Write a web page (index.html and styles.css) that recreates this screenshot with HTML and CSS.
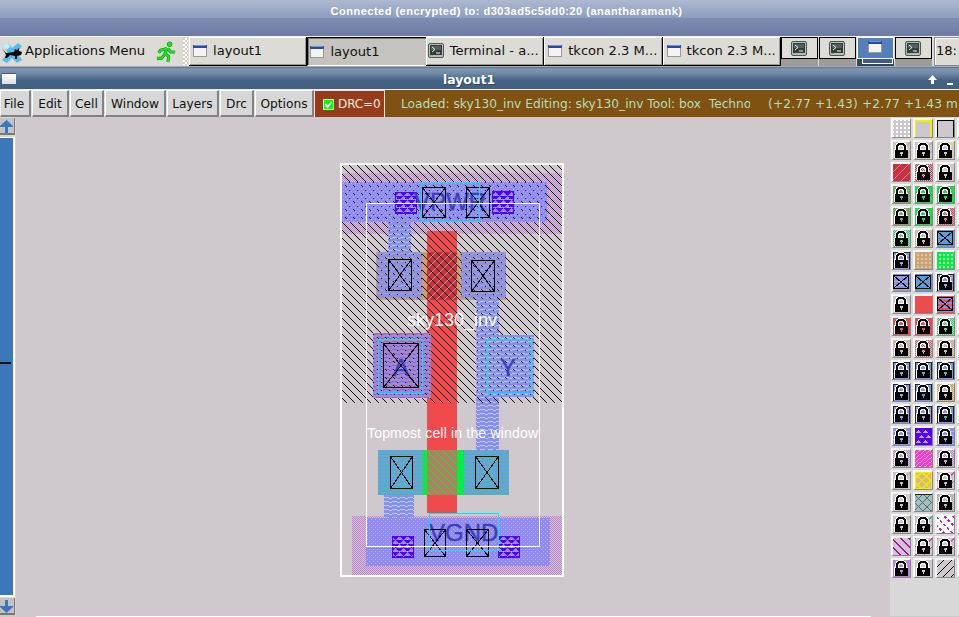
FILE: index.html
```html
<!DOCTYPE html>
<html lang="en">
<head>
<meta charset="utf-8">
<title>layout1</title>
<link rel="stylesheet" href="styles.css">
</head>
<body>
<svg class="defs" width="0" height="0">
  <symbol id="win" viewBox="0 0 14 12"><path fill="#999" d="M0 0h14v12H0z"/><path fill="#f4f4f2" d="M1 2h12v9H1z"/><path fill="#2549a6" d="M0 0h14v3H0z"/><path fill="#7890cc" d="M1 0h12v1H1z"/></symbol>
  <symbol id="term" viewBox="0 0 16 15"><rect x=".5" y=".5" width="15" height="14" rx="1.5" fill="#b8beb8" stroke="#4d5752"/><path fill="#343d3a" d="M2 2h12v10H2z"/><path fill="#56605c" d="M3 3h10v4H3z"/><path d="M4 4l3 2.5L4 9M8 10h4" fill="none" stroke="#eee"/><path fill="#5be02d" d="M2 12h3v1H2z"/></symbol>
  <symbol id="lock" viewBox="0 0 16 16"><path fill="#fff" fill-rule="evenodd" d="M5 0h6v1h2v2h1v4h1v9H1V7h1V3h1V1h2zM6 5v2h4V5H9V4H7v1zM7 10v2h1v2h1v-2h1v-2z"/><path fill-rule="evenodd" d="M3 8V3h1V2h1V1h6v1h1v1h1v5h2v8H2V8zM5 8h6V4h-1V3H6v1H5zM7 10v2h1v2h1v-2h1v-2z"/></symbol>
  <symbol id="xbox" viewBox="0 0 16 16"><path d="M.5 1.5h15v13H.5zM1 2l14 12M15 2L1 14" fill="none" stroke="#000"/></symbol>
</svg>
<div class="screen">
  <header class="vnc">Connected (encrypted) to: d303ad5c5dd0:20 (anantharamank)</header>
  <nav class="panel">
    <div class="apps">
      <svg class="xfce" viewBox="0 0 22 22"><path d="M1 3l6-2 4 5 6-5 4 3-5 7 5 7-5 3-5-5-5 5-5-3 6-7z" fill="#55bdee"/><path d="M1 3l6-2 2 4-4 3z" fill="#c9eefa"/><path d="M1 6l4 5 8-1 1-3 2 1 2-2v3l3 1-1 3-4 1v3h-2v-3l-5-1-3 3H4l1-3-2-4-2-3z"/></svg>
      <span class="apps-label">Applications Menu</span>
      <svg class="runner" viewBox="0 0 22 24"><circle cx="15" cy="3.500" r="2.600"/><path d="M12 8L5 10l-2 3M12 8l-2 6 4 3-1 6M10 14l-4 5H1M13 8l3 4h5"/><path class="hi" d="M12 8L5 10l-2 3M12 8l-2 6 4 3-1 6M10 14l-4 5H1M13 8l3 4h5"/></svg>
      <i class="grip"></i>
    </div>
    <div class="task"><svg class="i-win"><use href="#win"/></svg><span>layout1</span></div>
    <div class="task active"><svg class="i-win"><use href="#win"/></svg><span>layout1</span></div>
    <div class="task"><svg class="i-term"><use href="#term"/></svg><span class="near">Terminal - a...</span></div>
    <div class="task"><svg class="i-win"><use href="#win"/></svg><span>tkcon 2.3 M...</span></div>
    <div class="task"><svg class="i-win"><use href="#win"/></svg><span>tkcon 2.3 M...</span></div>
    <div class="pager">
      <div class="desk"><b><svg class="i-term"><use href="#term"/></svg></b></div>
      <div class="desk"><b><svg class="i-term"><use href="#term"/></svg></b></div>
      <div class="desk current"><b><svg class="i-win"><use href="#win"/></svg></b><i></i></div>
      <div class="desk"><b><svg class="i-term"><use href="#term"/></svg></b></div>
    </div>
    <div class="clock">18:</div>
  </nav>
  <div class="titlebar">
    <i class="winicon"></i><span>layout1</span>
    <svg class="ctl" viewBox="0 0 28 12"><path d="M5.500 1L10 6H7v4H4V6H1zM20 9h6v2h-6z" fill="#fff"/></svg>
  </div>
  <div class="menubar">
    <button class="m-file">File</button><button class="m-edit">Edit</button><button class="m-cell">Cell</button><button class="m-window">Window</button><button class="m-layers">Layers</button><button class="m-drc">Drc</button><button class="m-options">Options</button>
    <div class="drc"><svg viewBox="0 0 11 11"><path fill="#0f0" stroke="#bfb" d="M.5.5h10v10H.5z"/><path d="M2.500 5l2 3 4-5" fill="none" stroke="#fff" stroke-width="1.800"/></svg><span>DRC=0</span></div>
    <div class="status"><span class="loaded">Loaded: sky130_inv Editing: sky130_inv Tool: box&nbsp; Techno</span><span class="coords">(+2.77 +1.43) +2.77 +1.43 m</span></div>
  </div>
  <main class="work">
    <div class="scroll">
      <div class="arrow"><svg viewBox="0 0 13 13"><path d="M6.500 0L13 6v1H8v6H5V7H0V6z"/></svg></div>
      <div class="trough"><i></i></div>
      <div class="arrow"><svg viewBox="0 0 13 13"><path d="M6.500 13L13 7V6H8V0H5v6H0v1z"/></svg></div>
    </div>
    <svg class="canvas" viewBox="16 117 874 500" shape-rendering="crispEdges">
      <defs>
        <pattern id="hatch" width="8" height="8" patternUnits="userSpaceOnUse"><path d="M0 0h1v1H0zM1 1h1v1H1zM2 2h1v1H2zM3 3h1v1H3zM4 4h1v1H4zM5 5h1v1H5zM6 6h1v1H6zM7 7h1v1H7z"/></pattern>
        <pattern id="ghatch" width="8" height="8" patternUnits="userSpaceOnUse"><path fill="#00f040" d="M0 0h1v1H0zM1 1h1v1H1zM2 2h1v1H2zM3 3h1v1H3zM4 4h1v1H4zM5 5h1v1H5zM6 6h1v1H6zM7 7h1v1H7z"/></pattern>
        <pattern id="gate" width="8" height="8" patternUnits="userSpaceOnUse"><path fill="#d5a368" d="M7 0h1v1H7zM6 1h1v1H6zM5 2h1v1H5zM4 3h1v1H4zM3 4h1v1H3zM2 5h1v1H2zM1 6h1v1H1zM0 7h1v1H0z"/></pattern>
        <pattern id="check" width="2" height="2" patternUnits="userSpaceOnUse"><path fill="#c080d8" d="M0 0h1v1H0zM1 1h1v1H1z"/></pattern>
        <pattern id="metal" width="8" height="4" patternUnits="userSpaceOnUse"><path fill="#8090ff" d="M0 0h8v1H0zM5 1h3v1H5zM0 2h5v1H0zM0 3h8v1H0z"/></pattern>
        <pattern id="rail" width="8" height="8" patternUnits="userSpaceOnUse"><path fill="#8a8cfc" d="M0 0h8v8H0z"/><path fill="#ceb0c8" d="M1 1h1v1H1zM5 1h1v1H5zM3 3h1v1H3zM7 3h1v1H7zM1 5h1v1H1zM5 5h1v1H5zM3 7h1v1H3zM7 7h1v1H7z"/><path fill="#a882f0" d="M2 2h1v1H2zM6 2h1v1H6zM0 4h1v1H0zM4 4h1v1H4zM2 6h1v1H2zM6 6h1v1H6z"/></pattern>
        <pattern id="dots" width="8" height="8" patternUnits="userSpaceOnUse"><path d="M1 1h1v1H1zM2 2h1v1H2zM5 6h1v1H5z"/></pattern>
        <pattern id="tap" width="8" height="8" patternUnits="userSpaceOnUse"><path fill="#20d080" d="M2 3h1v1H2zM6 7h1v1H6z"/></pattern>
        <pattern id="via" width="8" height="8" patternUnits="userSpaceOnUse"><path fill="#5500ff" d="M0 0h7v1H0zM1 1h5v1H1zM2 2h3v1H2zM3 3h1v1H3zM4 4h4v1H4zM0 4h3v1H0zM5 5h3v1H5zM0 5h2v1H0zM6 6h3v1H6zM0 6h1v1H0z"/></pattern>
      </defs>
      <path fill="url(#check)" d="M342 173h220v61H342zM352 516h210v59H352z"/>
      <path fill="#d0a060" d="M376 252h130v48H376z"/>
      <path fill="#f04a4c" d="M427 231h30v282h-30zM373 333h58v65h-58z"/>
      <path fill="#c83048" d="M427 252h30v48h-30z"/><path fill="url(#gate)" d="M427 252h30v48h-30z"/>
      <path fill="#00f040" d="M378 450h131v45H378z"/>
      <path fill="#b08060" d="M427 450h30v45h-30z"/><path fill="url(#ghatch)" d="M427 450h30v45h-30z"/>
      <path fill="url(#rail)" d="M342 182h205v40H342zM366 518h184v48H366z"/>
      <path fill="url(#tap)" d="M388 184h130v36H388z"/>
      <path fill="url(#metal)" d="M388 222h23v30h-23zM377 252h45v47h-45zM461 252h45v47h-45zM476 299h23v36h-23zM476 335h58v62h-58zM476 397h23v53h-23zM373 333h58v65h-58zM378 450h45v45h-45zM464 450h45v45h-45zM384 495h30v23h-30z"/>
      <path fill="url(#hatch)" fill-rule="evenodd" d="M342 165h220v238H342zM342 182v40h205v-40zM377 252v47h45v-47zM461 252v47h45v-47zM476 335v62h58v-62zM373 333v65h58v-65zM388 222v30h23v-30zM476 299v36h23v-36z"/>
      <path fill="url(#dots)" d="M342 182h205v40H342zM377 252h45v47h-45zM461 252h45v47h-45zM476 299h23v36h-23zM476 335h58v62h-58zM373 333h58v65h-58zM388 222h23v30h-23z"/>
      <g fill="none" stroke="#5500ff"><path fill="url(#via)" d="M395.500 192.500h21v21h-21zM492.500 191.500h21v22h-21zM392.500 536.500h21v21h-21zM498.500 536.500h21v21h-21z"/></g>
      <g fill="#3a3fc0" stroke="#3a3fc0" stroke-width=".4" font-family="Liberation Sans, sans-serif" font-size="24">
        <text x="414" y="210">VPWR</text><text x="393" y="376">A</text><text x="500" y="376">Y</text><text x="429" y="541">VGND</text>
      </g>
      <g fill="none" stroke="#000">
        <path d="M422.500 187.500h23v30h-23zl23 30m0-30l-23 30M466.500 187.500h23v30h-23zl23 30m0-30l-23 30"/>
        <path d="M388.500 259.500h23v31h-23zl23 31m0-31l-23 31M471.500 260.500h23v31h-23zl23 31m0-31l-23 31"/>
        <path d="M383.500 343.500h35v44h-35zl35 44m0-44l-35 44"/>
        <path d="M390.500 456.500h22v32h-22zl22 32m0-32l-22 32M475.500 456.500h23v32h-23zl23 32m0-32l-23 32"/>
        <path d="M424.500 529.500h21v27h-21zl21 27m0-27l-21 27M466.500 529.500h22v27h-22zl22 27m0-27l-22 27"/>
      </g>
      <path fill="none" stroke="#00e8f0" d="M421.500 182.500h58v39h-58zM378.500 339.500h44v54h-44zM487.500 339.500h44v54h-44zM429.500 513.500h69v37h-69z"/>
      <path fill="none" stroke="#fff" d="M366.500 203.500h173v343h-173z"/>
      <path fill="none" stroke="#fff" stroke-width="2" d="M341 164h222v412H341z"/>
      <g fill="#fff" font-family="Liberation Sans, sans-serif"><text x="407" y="326" font-size="18" textLength="90">sky130_inv</text><text x="367" y="438" font-size="14" textLength="171">Topmost cell in the window</text></g>
      <path fill="#fff" d="M36 616h835v1H36z"/>
    </svg>
    <aside class="palette">
      <i class="grid"></i><i class="yline"></i><i class="bline"></i><i></i>
      <i class="tan few"><svg><use href="#lock"/></svg></i><i class="tan few"><svg><use href="#lock"/></svg></i><i class="yel few"><svg><use href="#lock"/></svg></i><i></i>
      <i class="crim"></i><i class="crimson chk"><svg><use href="#lock"/></svg></i><i><svg><use href="#lock"/></svg></i><i></i>
      <i class="mixg chk"><svg><use href="#lock"/></svg></i><i class="grn mix"><svg><use href="#lock"/></svg></i><i class="grn mix"><svg><use href="#lock"/></svg></i><i></i>
      <i class="mixg chk"><svg><use href="#lock"/></svg></i><i class="grn mix"><svg><use href="#lock"/></svg></i><i class="mixp chk"><svg><use href="#lock"/></svg></i><i></i>
      <i class="green chk"><svg><use href="#lock"/></svg></i><i class="tan chk"><svg><use href="#lock"/></svg></i><i class="mgreen"><svg><use href="#xbox"/></svg></i><i></i>
      <i class="wave dark"><svg><use href="#lock"/></svg></i><i class="tandots"></i><i class="grndots"></i><i></i>
      <i class="mtan"><svg><use href="#xbox"/></svg></i><i class="mgreen"><svg><use href="#xbox"/></svg></i><i class="wave dark"><svg><use href="#lock"/></svg></i><i></i>
      <i><svg><use href="#lock"/></svg></i><i class="red"></i><i class="mred"><svg><use href="#xbox"/></svg></i><i></i>
      <i class="red"><svg><use href="#lock"/></svg></i><i class="red"><svg><use href="#lock"/></svg></i><i class="green chk"><svg><use href="#lock"/></svg></i><i></i>
      <i class="tan chk"><svg><use href="#lock"/></svg></i><i class="redc chk"><svg><use href="#lock"/></svg></i><i class="tan chk"><svg><use href="#lock"/></svg></i><i></i>
      <i class="wave dark"><svg><use href="#lock"/></svg></i><i class="wave dark g"><svg><use href="#lock"/></svg></i><i class="wave dark g"><svg><use href="#lock"/></svg></i><i></i>
      <i class="wave dark"><svg><use href="#lock"/></svg></i><i class="wave dark g"><svg><use href="#lock"/></svg></i><i class="gold chk"><svg><use href="#lock"/></svg></i><i></i>
      <i class="wave dark"><svg><use href="#lock"/></svg></i><i class="wave dark"><svg><use href="#lock"/></svg></i><i class="wave dark g"><svg><use href="#lock"/></svg></i><i></i>
      <i class="wave"><svg><use href="#lock"/></svg></i><i class="viol"><svg viewBox="893 436 16 16"><path fill="#b8a8e8" d="M893 441l3-3 3 3zM900 441l3-3 3 3zM896 446l3-3 3 3zM903 446l3-3 3 3zM893 451l3-3 3 3zM900 451l3-3 3 3z"/></svg></i><i class="wave"><svg><use href="#lock"/></svg></i><i></i>
      <i class="purp chk"><svg><use href="#lock"/></svg></i><i class="pink"></i><i class="purp chk"><svg><use href="#lock"/></svg></i><i></i>
      <i class="tan few"><svg><use href="#lock"/></svg></i><i class="ycross"></i><i class="magf few"><svg><use href="#lock"/></svg></i><i></i>
      <i><svg><use href="#lock"/></svg></i><i class="teal"></i><i class="gray chk"><svg><use href="#lock"/></svg></i><i></i>
      <i class="tan few"><svg><use href="#lock"/></svg></i><i class="cy few"><svg><use href="#lock"/></svg></i><i class="magdash"></i><i></i>
      <i class="magline"></i><i class="magf few"><svg><use href="#lock"/></svg></i><i class="magf few"><svg><use href="#lock"/></svg></i><i></i>
      <i class="lilac"><svg><use href="#lock"/></svg></i><i><svg><use href="#lock"/></svg></i><i class="blkline"></i><i></i>
    </aside>
  </main>
</div>
</body>
</html>
```
FILE: styles.css
```css
* { box-sizing: border-box; }
body { margin: 0; background: #cfc9cd; font-family: "DejaVu Sans", sans-serif; color: #111; overflow: hidden; }
svg { display: block; flex: none; }
.defs { position: absolute; }
.screen { width: 959px; height: 617px; display: flex; flex-direction: column; overflow: hidden; }

.vnc { height: 36px; flex: none; padding-top: 5px; text-align: center; padding-left: 54px; color: #fff; font: bold 11px/13px "Liberation Sans", sans-serif; letter-spacing: .5px; background: linear-gradient(#aeb9d0 0, #8f9dbf 17.5px, #7e8db3 18px, #6c7ba3 36px); }

.panel { height: 31px; flex: none; display: flex; background: #dddbd5; border-top: 1px solid #f4f3ef; font-size: 13.1px; white-space: nowrap; border-bottom: 1px solid #aaa; }
.apps { width: 189px; flex: none; display: flex; align-items: center; }
.xfce { width: 22px; height: 22px; margin: 2px 2px 0 1px; }
.apps-label { width: 131px; padding-bottom: 2px; }
.runner { width: 20px; height: 22px; overflow: visible; fill: #20e820; }
.runner path { fill: none; stroke: #109c10; stroke-width: 3.4; stroke-linejoin: round; }
.runner .hi { stroke: #20e820; stroke-width: 1.8; }
.runner circle { stroke: #109c10; }
.grip { width: 5px; height: 27px; margin-left: 7px; background: repeating-conic-gradient(#fff 0 25%, #d0cec8 0 50%) 0 0/4px 4px; }
.task { width: 118.4px; flex: none; display: flex; align-items: center; padding: 0 0 1px 2px; gap: 6px; border: 1px solid #000; border-width: 0 1px 1px 0; box-shadow: inset 1px 1px #fff, inset -1px -1px #999; overflow: hidden; }
.task.active { padding: 0 0 1px; background: #c5c3be; border-width: 1px 0 0 1px; border-bottom: 1px solid #fff; box-shadow: inset 1px 1px #777; }
.i-win { width: 14px; height: 12px; margin: 1px 0 0 2px; }
.i-term { width: 16px; height: 15px; }
.pager { display: flex; gap: 1px; width: 152px; flex: none; }
.desk { width: 37px; height: 29px; background: #9d9c96; }
.desk b { display: flex; width: 37px; height: 22px; align-items: center; justify-content: center; background: #dedcd6; border: 1px solid #000; }
.desk.current { background: #32465e; }
.desk.current b { background: #5480ba; border-color: #fff; }
.desk.current .i-win { margin: -2px 0 0; }
.desk i { display: block; width: 31px; height: 5px; margin-left: 5px; border: 1px solid #fff; border-top: 0; background: #3d5c86; }
.clock { margin-left: 1px; width: 60px; flex: none; padding: 5px 0 0 1px; border: 1px solid #888; box-shadow: inset 1px 1px #fff; }

.titlebar { height: 22px; flex: none; display: flex; align-items: center; background: linear-gradient(#5b7390 0, #8096b1 2px, #6c87a4 7px, #446386 13px, #41607f 22px); color: #fff; font-weight: bold; font-size: 12.4px; }
.titlebar span { width: 484px; margin-left: 427px; padding-top: 3px; text-shadow: 1px 1px #34485e; }
.winicon { width: 14px; height: 11px; margin: 0 0 0 2px; background: linear-gradient(#3858a4 0 1px, #fff 1px, #ddd); }
.ctl { width: 28px; height: 12px; margin-top: 3px; }

.menubar { height: 28px; flex: none; display: flex; background: #e3e1e1; border-top: 1px solid #eee; }
.menubar button { font: 12.2px "DejaVu Sans", sans-serif; color: #111; padding: 1px 0 0; border: solid; border-width: 1px 2px 2px 1px; border-color: #fff #828282 #828282 #fff; background: #d7d7d7; height: 27px; margin: 0 1px 0 0; flex: none; }
.m-file { width: 31px; } .m-edit { width: 37px; } .m-cell { width: 34px; } .m-window { width: 61px; } .m-layers { width: 52px; } .m-drc { width: 34px; } .m-options { width: 59px; }
.menubar .m-file { padding-right: 2px; }
.drc { width: 69px; flex: none; margin-top: 1px; display: flex; align-items: center; gap: 4px; padding-left: 8px; background: #963c1c; color: #f4e9dc; font-size: 12px; letter-spacing: -.1px; }
.drc svg { width: 11px; height: 11px; }
.status { flex: 1; display: flex; align-items: center; margin-left: 1px; padding-left: 16px; background: #7f5211; color: #b8dcbe; font-size: 12.2px; white-space: nowrap; overflow: hidden; }
.loaded { width: 349px; flex: none; overflow: hidden; }
.coords { margin-left: 18px; letter-spacing: .14px; }

.work { flex: 1; display: flex; min-height: 0; }
.scroll { width: 16px; display: flex; flex-direction: column; background: #d7d7d7; flex: none; height: 498px; }
.arrow { width: 15px; height: 17px; flex: none; margin-top: 1px; background: #c3c3c3; border: solid #777; border-width: 0 1px 2px 0; padding-top: 2px; }
.arrow svg { width: 13px; height: 13px; fill: #3a78bb; }
.trough { flex: 1; margin: 2px 0 0; border: solid #fff; border-width: 1px 2px 2px 0; width: 15px; background: #3a78b9; padding-top: 224px; }
.trough i { display: block; width: 11px; height: 2px; background: #111; }
.canvas { width: 874px; height: 500px; flex: none; }
.palette { width: 69px; flex: none; padding: 1px 0 0 1px; display: grid; grid-template-columns: repeat(4, 20px); grid-auto-rows: 20px; gap: 2px; background: #d8d8d8; overflow: hidden; height: 499px; align-content: start; }
.palette i { --c: #cec8cc; --b: #cec8cc; width: 20px; height: 20px; border: solid; border-width: 2px 1px 1px 2px; padding-right: 1px; border-color: #f6f6f6 #888 #888 #f6f6f6; background: var(--b) padding-box; overflow: hidden; }
.palette svg { width: 16px; height: 16px; shape-rendering: crispEdges; }
.palette .chk { background: repeating-conic-gradient(var(--c) 0 25%, var(--b) 0 50%) 0 0/2px 2px padding-box; }
.palette .few { background: repeating-linear-gradient(135deg, var(--c) 0 1px, var(--b) 1px 6px) padding-box; }
.palette .tan { --c: #d2a679; }
.palette .yel { --c: #f0f000; }
.palette .crimson { --c: #d02848; }
.palette .green { --c: #00e850; }
.palette .redc { --c: #f04a4c; }
.palette .gold { --c: #d8a840; }
.palette .purp { --c: #c080dd; }
.palette .gray { --c: #aaa; }
.palette .magf { --c: #e040b0; }
.palette .cy { --c: #20b8b0; }
.palette .mixg { --c: #20c850; --b: #d09070; }
.palette .mixp { --c: #d04080; --b: #d2b28a; }
.palette .mix { background: repeating-linear-gradient(135deg, #00ee44 0 5px, #e85050 5px 6px) padding-box; }
.palette .red { --b: #f04a4c; }
.palette .lilac { --b: #c080dd; }
.palette .grid { background: linear-gradient(90deg, #cec8cc 0 2px, transparent 2px) 1px 1px/4px 4px padding-box, linear-gradient(#cec8cc 0 2px, #fff 2px) 1px 1px/4px 4px padding-box; }
.palette .yline { box-shadow: inset 1px 2px #f0f000, inset -2px 0 #f0f000; }
.palette .bline { box-shadow: inset 1px 1px #000, inset -1px 0 #000; }
.palette .crim { background: repeating-linear-gradient(135deg, #c83048 0 5px, #d09060 5px 6px) padding-box; }
.palette .wave { background: repeating-linear-gradient(#8090ff 0 3px, #d2b28a 3px 4px) padding-box; }
.palette .dark { box-shadow: inset 1px 1px #223, inset -1px 0 #223; }
.palette .g { background: repeating-linear-gradient(#8090ff 0 3px, #00e850 3px 4px) padding-box; }
.palette .mgreen { background: repeating-linear-gradient(#7088ff 0 3px, #20d870 3px 4px) padding-box; }
.palette .mtan { background: repeating-linear-gradient(#8090ff 0 3px, #d2a679 3px 4px) padding-box; }
.palette .mred { background: repeating-linear-gradient(#f04a4c 0 2px, #8090ff 2px 4px) padding-box; }
.palette .tandots, .palette .grndots { --c: #d2a368; background: linear-gradient(90deg, var(--c) 2px, transparent 2px) 0 0/4px 4px padding-box, linear-gradient(var(--c) 2px, #cec8cc 2px) 0 0/4px 4px padding-box; }
.palette .grndots { --c: #00f040; }
.palette .viol { --b: #5500ff; }
.palette .pink { background: repeating-linear-gradient(135deg, #d8b0cc 0 1px, transparent 1px 3px) 0 0/5px 4px padding-box, #ff38c8 padding-box; }
.palette .ycross { background: repeating-linear-gradient(45deg, transparent 0 4px, #e8e800 4px 6px) padding-box, repeating-linear-gradient(135deg, #d8b0a0 0 4px, #e8e800 4px 6px) padding-box; box-shadow: inset 0 0 0 1px #f0f000; }
.palette .teal { background: repeating-linear-gradient(45deg, transparent 0 5px, #108888 5px 6px) padding-box, repeating-linear-gradient(135deg, #b8b8b8 0 5px, #108888 5px 6px) padding-box; box-shadow: inset 0 1px #222; }
.palette .magdash { background: repeating-linear-gradient(135deg, transparent 0 3px, #fff 3px 5px) padding-box, repeating-linear-gradient(45deg, #fff 0 4px, #c020c8 4px 6px) padding-box; }
.palette .magline { background: repeating-linear-gradient(45deg, #cec8cc 0 4.5px, #b800c0 4.5px 6px) padding-box; }
.palette .blkline { background: repeating-linear-gradient(135deg, #cec8cc 0 4.6px, #000 4.6px 5.6px) padding-box; }
```
